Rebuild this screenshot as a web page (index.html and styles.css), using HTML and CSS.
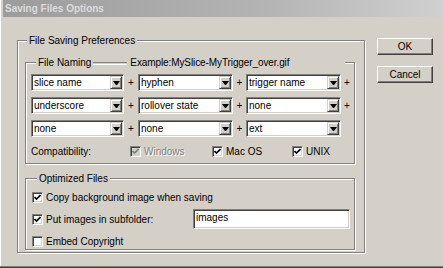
FILE: index.html
```html
<!DOCTYPE html>
<html>
<head>
<meta charset="utf-8">
<link rel="stylesheet" href="styles.css">
</head>
<body>
<div class="window">
  <div class="titlebar">Saving Files Options</div>
  <div class="client">
    <fieldset class="group outer">
      <legend class="legend">File Saving Preferences</legend>
      <fieldset class="group naming">
        <legend class="legend legend-flex">
          <span class="legend-text">File Naming</span>
          <span class="filler"></span>
          <span class="example">Example:MySlice-MyTrigger_over.gif</span>
        </legend>
        <div class="combos">
          <div class="combo"><span class="combo-text">slice name</span><span class="combo-btn"><span class="tri"></span></span></div>
          <div class="plus">+</div>
          <div class="combo"><span class="combo-text">hyphen</span><span class="combo-btn"><span class="tri"></span></span></div>
          <div class="plus">+</div>
          <div class="combo"><span class="combo-text">trigger name</span><span class="combo-btn"><span class="tri"></span></span></div>
          <div class="plus">+</div>

          <div class="combo"><span class="combo-text">underscore</span><span class="combo-btn"><span class="tri"></span></span></div>
          <div class="plus">+</div>
          <div class="combo"><span class="combo-text">rollover state</span><span class="combo-btn"><span class="tri"></span></span></div>
          <div class="plus">+</div>
          <div class="combo"><span class="combo-text">none</span><span class="combo-btn"><span class="tri"></span></span></div>
          <div class="plus">+</div>

          <div class="combo"><span class="combo-text">none</span><span class="combo-btn"><span class="tri"></span></span></div>
          <div class="plus">+</div>
          <div class="combo"><span class="combo-text">none</span><span class="combo-btn"><span class="tri"></span></span></div>
          <div class="plus">+</div>
          <div class="combo"><span class="combo-text">ext</span><span class="combo-btn"><span class="tri"></span></span></div>
          <div class="plus"></div>
        </div>
        <div class="compat">
          <span class="compat-label">Compatibility:</span>
          <span class="check check-win disabled">
            <span class="box"><svg width="7" height="7" viewBox="0 0 7 7"><polyline points="0.5,3 2.5,5 6.5,1" /></svg></span>
            <span class="check-label">Windows</span>
          </span>
          <span class="check check-mac">
            <span class="box"><svg width="7" height="7" viewBox="0 0 7 7"><polyline points="0.5,3 2.5,5 6.5,1" /></svg></span>
            <span class="check-label">Mac OS</span>
          </span>
          <span class="check">
            <span class="box"><svg width="7" height="7" viewBox="0 0 7 7"><polyline points="0.5,3 2.5,5 6.5,1" /></svg></span>
            <span class="check-label">UNIX</span>
          </span>
        </div>
      </fieldset>
      <fieldset class="group optimized">
        <legend class="legend">Optimized Files</legend>
        <div class="opt-row">
          <span class="box"><svg width="7" height="7" viewBox="0 0 7 7"><polyline points="0.5,3 2.5,5 6.5,1" /></svg></span>
          <span class="check-label">Copy background image when saving</span>
        </div>
        <div class="opt-row opt-row-field">
          <span class="box"><svg width="7" height="7" viewBox="0 0 7 7"><polyline points="0.5,3 2.5,5 6.5,1" /></svg></span>
          <span class="check-label subfolder-label">Put images in subfolder:</span>
          <span class="textfield">images</span>
        </div>
        <div class="opt-row opt-row-last">
          <span class="box"></span>
          <span class="check-label">Embed Copyright</span>
        </div>
      </fieldset>
    </fieldset>
    <div class="buttons">
      <div class="button">OK</div>
      <div class="button">Cancel</div>
    </div>
  </div>
</div>
</body>
</html>
```

FILE: styles.css
```css
html, body {
  margin: 0;
  padding: 0;
}
body {
  width: 443px;
  height: 268px;
  overflow: hidden;
  background: #d4d0c8;
  font-family: "Liberation Sans", Arial, sans-serif;
  font-size: 10px;
  color: #000;
}
.window {
  width: 443px;
  height: 268px;
  box-sizing: border-box;
  padding: 0 0 3px 3px;
  background: #d4d0c8;
  border-bottom: 1px solid #404040;
  box-shadow: inset 0 -1px 0 #808080, inset 1px 0 0 #ffffff;
  display: flex;
  flex-direction: column;
}
.titlebar {
  height: 17px;
  line-height: 17px;
  padding-left: 2px;
  font-weight: bold;
  font-size: 10px;
  color: #dcdcdc;
  background: linear-gradient(to right, #9c9c9c 0%, #b4b4b4 60%, #d0d0d0 100%);
}
.client {
  display: flex;
  align-items: flex-start;
  padding: 17px 0 0 14px;
}
.group {
  margin: 0;
  min-inline-size: 0;
  border: 1px solid #808080;
  box-shadow: inset 1px 1px 0 #ffffff, 1px 1px 0 #ffffff;
}
.legend {
  margin-left: 2px;
  padding: 0 2px;
  line-height: 13px;
  height: 13px;
  background: #d4d0c8;
}
.outer {
  width: 348px;
  box-sizing: border-box;
  padding: 9px 9px 2px 7px;
}
.naming {
  padding: 5px 0 5px 5px;
}
.naming .legend,
.optimized .legend {
  margin-left: 5px;
}
.legend-flex {
  display: flex;
  padding: 0 0 0 2px;
}
.legend-text {
  padding-right: 2px;
}
.filler {
  width: 34px;
  height: 1px;
  margin-top: 6px;
  border-top: 1px solid #808080;
  border-bottom: 1px solid #ffffff;
}
.example {
  width: 215px;
  padding-left: 3px;
  letter-spacing: -0.1px;
}
.combos {
  display: grid;
  grid-template-columns: 93px 14px 95px 13px 95px 12px;
  grid-auto-rows: 17px;
  row-gap: 6px;
}
.combo {
  box-sizing: border-box;
  height: 17px;
  display: flex;
  align-items: stretch;
  background: #ffffff;
  border: 1px solid;
  border-color: #808080 #ffffff #ffffff #808080;
  box-shadow: inset 1px 1px 0 #404040, inset -1px -1px 0 #d4d0c8;
  padding: 1px;
}
.combo-text {
  flex: 1;
  line-height: 13px;
  padding-left: 1px;
  white-space: nowrap;
  overflow: hidden;
}
.combo-btn {
  box-sizing: border-box;
  width: 12px;
  background: #d4d0c8;
  border: 1px solid;
  border-color: #d4d0c8 #404040 #404040 #d4d0c8;
  box-shadow: inset 1px 1px 0 #ffffff, inset -1px -1px 0 #808080;
  display: flex;
  align-items: center;
  justify-content: center;
}
.tri {
  width: 1px;
  height: 0;
  border-top: 4px solid #000;
  border-left: 3px solid transparent;
  border-right: 3px solid transparent;
}
.plus {
  display: flex;
  align-items: center;
  justify-content: center;
  font-size: 10px;
}
.compat {
  display: flex;
  align-items: center;
  height: 13px;
  margin-top: 8px;
}
.compat-label {
  width: 99px;
}
.check {
  display: flex;
  align-items: center;
  gap: 3px;
}
.check-win {
  width: 82px;
}
.check-mac {
  width: 80px;
}
.box {
  box-sizing: border-box;
  width: 11px;
  height: 11px;
  flex: none;
  background: #ffffff;
  border: 1px solid;
  border-color: #808080 #ffffff #ffffff #808080;
  box-shadow: inset 1px 1px 0 #404040, inset -1px -1px 0 #d4d0c8;
  display: flex;
  align-items: center;
  justify-content: center;
}
.box svg {
  display: block;
}
.box polyline {
  fill: none;
  stroke: #000;
  stroke-width: 1.7;
}
.disabled .box {
  background: #d4d0c8;
}
.disabled .box polyline {
  stroke: #808080;
}
.disabled .check-label {
  color: #808080;
  text-shadow: 1px 1px 0 #ffffff;
}
.check-label {
  white-space: nowrap;
  line-height: 13px;
}
.optimized {
  margin-top: 8px;
  padding: 6px 0 1px 6px;
}
.opt-row {
  display: flex;
  align-items: center;
  gap: 3px;
  height: 13px;
}
.opt-row-field {
  height: 20px;
  margin-top: 5px;
}
.opt-row-last {
  margin-top: 6px;
}
.subfolder-label {
  width: 144px;
}
.textfield {
  box-sizing: border-box;
  width: 157px;
  height: 20px;
  line-height: 16px;
  padding-left: 2px;
  background: #ffffff;
  border: 1px solid;
  border-color: #808080 #ffffff #ffffff #808080;
  box-shadow: inset 1px 1px 0 #404040, inset -1px -1px 0 #d4d0c8;
}
.buttons {
  display: flex;
  flex-direction: column;
  gap: 11px;
  margin: 4px 0 0 12px;
}
.button {
  box-sizing: border-box;
  width: 56px;
  height: 17px;
  line-height: 15px;
  text-align: center;
  background: #d4d0c8;
  border: 1px solid;
  border-color: #ffffff #404040 #404040 #ffffff;
  box-shadow: inset -1px -1px 0 #808080;
}
```
